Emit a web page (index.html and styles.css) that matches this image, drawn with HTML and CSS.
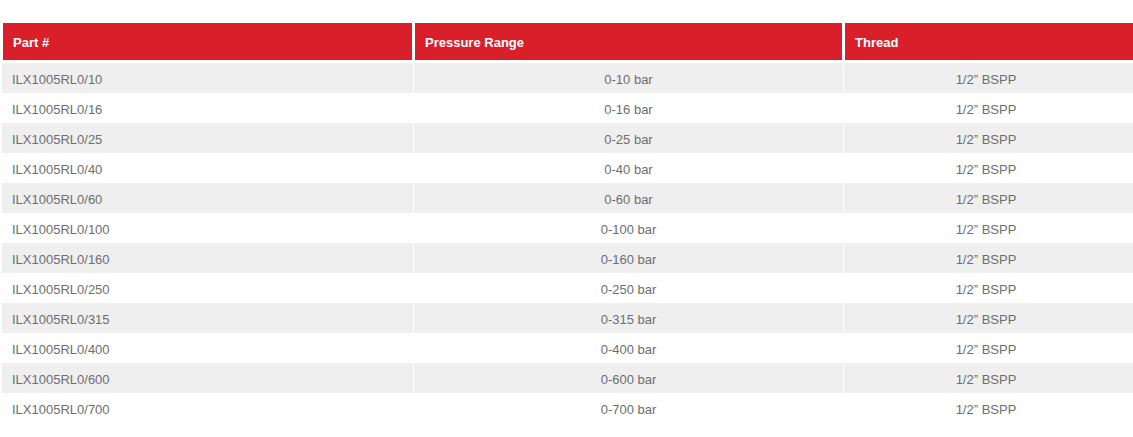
FILE: index.html
```html
<!DOCTYPE html>
<html lang="en">
<head>
<meta charset="utf-8">
<title>Pressure Transmitters</title>
<link rel="stylesheet" href="styles.css">
</head>
<body>
<div class="wrap">
<table class="spec">
  <colgroup>
    <col class="c1"><col class="c2"><col class="c3">
  </colgroup>
  <thead>
    <tr><th>Part #</th><th>Pressure Range</th><th>Thread</th></tr>
  </thead>
  <tbody>
    <tr><td>ILX1005RL0/10</td><td>0-10 bar</td><td>1/2” BSPP</td></tr>
    <tr><td>ILX1005RL0/16</td><td>0-16 bar</td><td>1/2” BSPP</td></tr>
    <tr><td>ILX1005RL0/25</td><td>0-25 bar</td><td>1/2” BSPP</td></tr>
    <tr><td>ILX1005RL0/40</td><td>0-40 bar</td><td>1/2” BSPP</td></tr>
    <tr><td>ILX1005RL0/60</td><td>0-60 bar</td><td>1/2” BSPP</td></tr>
    <tr><td>ILX1005RL0/100</td><td>0-100 bar</td><td>1/2” BSPP</td></tr>
    <tr><td>ILX1005RL0/160</td><td>0-160 bar</td><td>1/2” BSPP</td></tr>
    <tr><td>ILX1005RL0/250</td><td>0-250 bar</td><td>1/2” BSPP</td></tr>
    <tr><td>ILX1005RL0/315</td><td>0-315 bar</td><td>1/2” BSPP</td></tr>
    <tr><td>ILX1005RL0/400</td><td>0-400 bar</td><td>1/2” BSPP</td></tr>
    <tr><td>ILX1005RL0/600</td><td>0-600 bar</td><td>1/2” BSPP</td></tr>
    <tr><td>ILX1005RL0/700</td><td>0-700 bar</td><td>1/2” BSPP</td></tr>
  </tbody>
</table>
</div>
</body>
</html>
```
FILE: styles.css
```css
html, body {
  margin: 0;
  padding: 0;
  background: #fff;
}
body {
  font-family: "Liberation Sans", Arial, sans-serif;
  overflow: hidden;
}
.wrap {
  padding: 23px 0 0 2px;
}
.spec {
  border-collapse: separate;
  border-spacing: 0;
  width: 1131px;
  table-layout: fixed;
}
.spec .c1 { width: 412px; }
.spec .c2 { width: 430px; }
.spec .c3 { width: 289px; }
.spec th {
  background: #d81f2a;
  color: #fff;
  font-weight: 700;
  font-size: 13px;
  text-align: left;
  height: 40px;
  padding: 2px 0 0 10px;
  box-sizing: border-box;
  border-left: 1px solid #fff;
  border-right: 2px solid #fff;
  border-bottom: 3px solid #fff;
  vertical-align: middle;
}
.spec th:last-child {
  border-right: 0;
}
.spec td {
  height: 30px;
  padding: 3px 10px 0;
  box-sizing: border-box;
  font-size: 13px;
  color: #6e6e6e;
  border-right: 1px solid #fff;
  vertical-align: middle;
  white-space: nowrap;
}
.spec td:last-child {
  border-right: 0;
  padding-right: 15px;
}
.spec td + td {
  text-align: center;
}
.spec tbody tr:nth-child(odd) td {
  background: #efefef;
}
```
